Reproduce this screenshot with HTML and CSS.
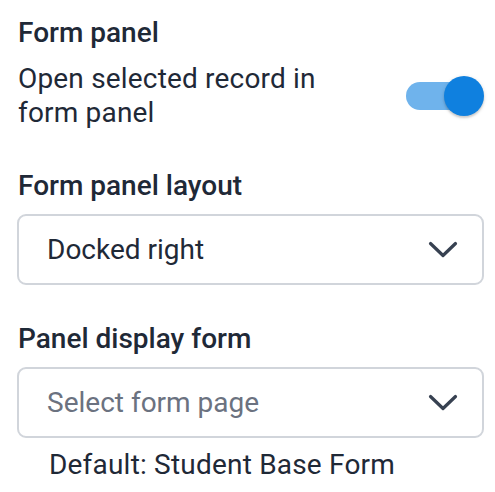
FILE: index.html
```html
<!DOCTYPE html>
<html lang="en">
<head>
<meta charset="utf-8">
<title>Form panel settings</title>
<link rel="stylesheet" href="styles.css">
</head>
<body>
<div class="panel">
  <div class="section-title">Form panel</div>
  <div class="toggle-row">
    <div class="toggle-text">Open selected record in form panel</div>
    <div class="switch" role="switch" aria-checked="true">
      <span class="track"></span>
      <span class="thumb"></span>
    </div>
  </div>

  <div class="label label-layout">Form panel layout</div>
  <div class="select">
    <span class="value">Docked right</span>
    <svg class="chevron" viewBox="0 0 30 18" width="30" height="18" aria-hidden="true"><path d="M2.5 2.5 L15 14.5 L27.5 2.5" fill="none" stroke="#374151" stroke-width="3.2" stroke-linecap="round" stroke-linejoin="round"/></svg>
  </div>

  <div class="label label-display">Panel display form</div>
  <div class="select">
    <span class="value placeholder">Select form page</span>
    <svg class="chevron" viewBox="0 0 30 18" width="30" height="18" aria-hidden="true"><path d="M2.5 2.5 L15 14.5 L27.5 2.5" fill="none" stroke="#374151" stroke-width="3.2" stroke-linecap="round" stroke-linejoin="round"/></svg>
  </div>
  <div class="hint">Default: Student Base Form</div>
</div>
</body>
</html>
```
FILE: styles.css
```css
html, body {
  margin: 0;
  padding: 0;
  background: #ffffff;
}

body {
  font-family: Roboto, "Liberation Sans", Arial, sans-serif;
  color: #1f2937;
  font-size: 28px;
  line-height: 34px;
}

.panel {
  padding: 16px 11px 0 18px;
  display: flex;
  flex-direction: column;
}

.section-title {
  font-weight: 500;
}

.toggle-row {
  margin-top: 12px;
  display: flex;
  align-items: center;
  justify-content: space-between;
}

.toggle-text {
  width: 316px;
  letter-spacing: 0.18px;
}

.switch {
  position: relative;
  width: 78px;
  height: 42px;
  flex: none;
}

.switch .track {
  position: absolute;
  left: 0;
  top: 7px;
  width: 68px;
  height: 28px;
  border-radius: 14px;
  background: #6fb3ec;
}

.switch .thumb {
  position: absolute;
  right: 0;
  top: 1px;
  width: 40px;
  height: 40px;
  border-radius: 50%;
  background: #0f80df;
  box-shadow: 0 2px 2px rgba(0, 0, 0, 0.14), 0 1px 4px rgba(0, 0, 0, 0.12);
}

.label {
  font-weight: 500;
}

.label-layout {
  margin-top: 39px;
}

.label-display {
  margin-top: 37px;
}

.select {
  margin-top: 11px;
  box-sizing: border-box;
  height: 71px;
  border: 2px solid #d1d5db;
  border-radius: 9px;
  display: flex;
  align-items: center;
  justify-content: space-between;
  padding: 0 24px 0 28px;
  margin-left: -1px;
}

.value {
  color: #1f2937;
}

.placeholder {
  color: #6b7280;
}

.chevron {
  display: block;
  flex: none;
}

.hint {
  margin-top: 10px;
  padding-left: 31px;
  letter-spacing: 0.2px;
}
```
